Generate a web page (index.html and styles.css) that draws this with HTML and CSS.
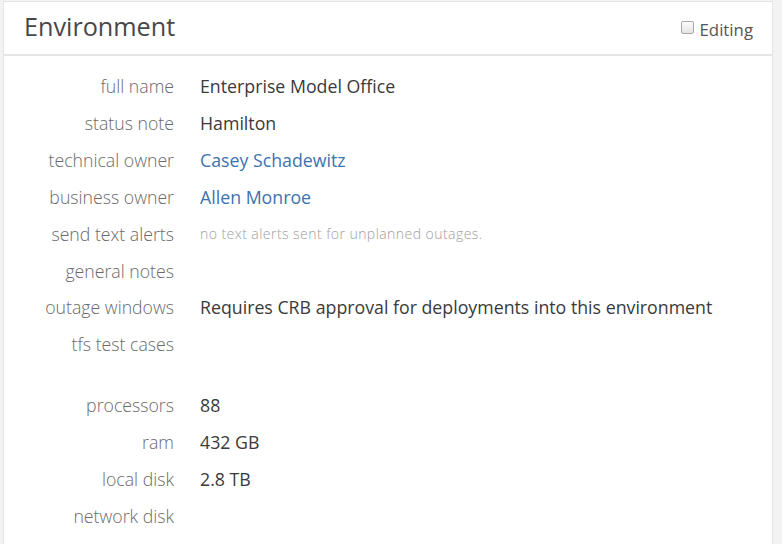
FILE: index.html
```html
<!DOCTYPE html>
<html>
<head>
<meta charset="utf-8">
<link rel="stylesheet" href="styles.css">
</head>
<body>
<div class="panel">
  <div class="panel-head">
    <h2 class="title">Environment</h2>
    <label class="edit"><span class="box"></span>Editing</label>
  </div>
  <div class="panel-body">
    <dl class="props">
      <dt>full name</dt><dd>Enterprise Model Office</dd>
      <dt>status note</dt><dd>Hamilton</dd>
      <dt>technical owner</dt><dd><a class="link">Casey Schadewitz</a></dd>
      <dt>business owner</dt><dd><a class="link">Allen Monroe</a></dd>
      <dt>send text alerts</dt><dd class="muted">no text alerts sent for unplanned outages.</dd>
      <dt>general notes</dt><dd></dd>
      <dt>outage windows</dt><dd>Requires CRB approval for deployments into this environment</dd>
      <dt>tfs test cases</dt><dd></dd>
    </dl>
    <dl class="props hw">
      <dt>processors</dt><dd>88</dd>
      <dt>ram</dt><dd>432 GB</dd>
      <dt>local disk</dt><dd>2.8 TB</dd>
      <dt>network disk</dt><dd></dd>
    </dl>
  </div>
</div>
</body>
</html>
```
FILE: styles.css
```css
html, body {
  margin: 0;
  padding: 0;
}
body {
  background: #f3f3f3;
  font-family: "Open Sans", "Noto Sans", sans-serif;
  color: #333;
  height: 544px;
  overflow: hidden;
}
.panel {
  margin: 1px 0 0 3px;
  width: 768px;
  background: #fff;
  border: 1px solid #e4e4e4;
  height: 560px;
}
.panel-head {
  height: 52px;
  border-bottom: 2px solid #e6e6e6;
  display: flex;
  align-items: center;
  justify-content: space-between;
  padding: 0 19px 0 20px;
}
.title {
  margin: 0;
  font-size: 25.2px;
  font-weight: 400;
  color: #474747;
  line-height: 1;
  position: relative;
  top: -1px;
}
.edit {
  display: flex;
  align-items: center;
  font-size: 16.8px;
  color: #555;
  gap: 6px;
  margin-top: 2px;
}
.box {
  width: 11px;
  height: 11px;
  border: 1px solid #a8a8a8;
  border-radius: 2px;
  background: linear-gradient(#fdfdfd, #e4e4e4);
  margin-top: -4px;
}
.panel-body {
  padding-top: 12px;
}
.props {
  margin: 0;
  display: grid;
  grid-template-columns: 170px 1fr;
  grid-auto-rows: 36.85px;
  column-gap: 26px;
  align-items: center;
  font-size: 17.75px;
}
.props dt {
  text-align: right;
  color: #6a6a6a;
  font-weight: 300;
  font-size: 17.7px;
}
.props dd {
  margin: 0;
  color: #3a3a3a;
  white-space: nowrap;
}
.props .link {
  color: #3d72b0;
  text-decoration: none;
}
.props .muted {
  font-size: 14px;
  letter-spacing: 0.45px;
  color: #a0a0a0;
  font-weight: 300;
}
.hw {
  margin-top: 24px;
}
```
